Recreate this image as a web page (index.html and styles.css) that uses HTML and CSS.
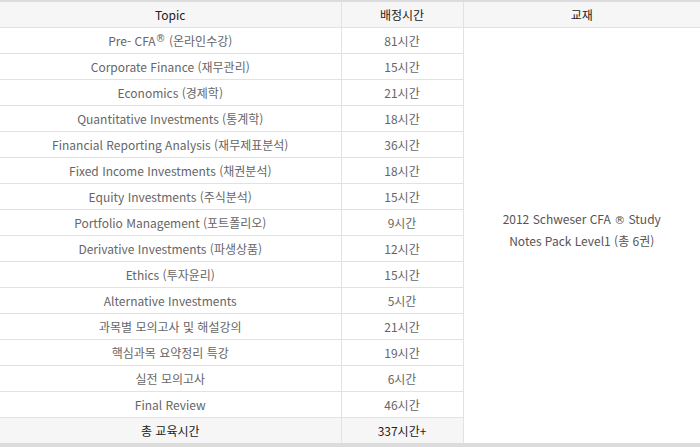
FILE: index.html
```html
<!DOCTYPE html>
<html lang="ko">
<head>
<meta charset="utf-8">
<link rel="stylesheet" href="styles.css">
</head>
<body>
<table class="curri">
  <colgroup>
    <col class="c-topic">
    <col class="c-time">
    <col class="c-book">
  </colgroup>
  <thead>
    <tr class="head">
      <th>Topic</th>
      <th>배정시간</th>
      <th>교재</th>
    </tr>
  </thead>
  <tbody>
    <tr><td>Pre- CFA<sup class="reg">®</sup> (온라인수강)</td><td>81시간</td>
      <td class="book" rowspan="16">2012 Schweser CFA <span class="reg-in">®</span> Study<br>Notes Pack Level1 (총 6권)</td></tr>
    <tr><td>Corporate Finance (재무관리)</td><td>15시간</td></tr>
    <tr><td>Economics (경제학)</td><td>21시간</td></tr>
    <tr><td>Quantitative Investments (통계학)</td><td>18시간</td></tr>
    <tr><td>Financial Reporting Analysis (재무제표분석)</td><td>36시간</td></tr>
    <tr><td>Fixed Income Investments (채권분석)</td><td>18시간</td></tr>
    <tr><td>Equity Investments (주식분석)</td><td>15시간</td></tr>
    <tr><td>Portfolio Management (포트폴리오)</td><td>9시간</td></tr>
    <tr><td>Derivative Investments (파생상품)</td><td>12시간</td></tr>
    <tr><td>Ethics (투자윤리)</td><td>15시간</td></tr>
    <tr><td>Alternative Investments</td><td>5시간</td></tr>
    <tr><td>과목별 모의고사 및 해설강의</td><td>21시간</td></tr>
    <tr><td>핵심과목 요약정리 특강</td><td>19시간</td></tr>
    <tr><td>실전 모의고사</td><td>6시간</td></tr>
    <tr><td>Final Review</td><td>46시간</td></tr>
    <tr class="total"><td>총 교육시간</td><td>337시간+</td></tr>
  </tbody>
</table>
</body>
</html>
```

FILE: styles.css
```css
html, body {
  margin: 0;
  padding: 0;
  background: #fff;
}
.curri {
  width: 700px;
  border-collapse: collapse;
  table-layout: fixed;
  font-family: "Noto Sans CJK KR", "Noto Sans", sans-serif;
  font-size: 12px;
  color: #666;
  border-top: 2px solid #dcdcdc;
  border-bottom: 4px solid #dcdcdc;
}
.c-topic { width: 341px; }
.c-time { width: 122px; }
.c-book { width: 237px; }
.curri th,
.curri td {
  height: 25px;
  padding: 0;
  text-align: center;
  vertical-align: middle;
  border: 1px solid #e2e2e2;
  line-height: 14px;
  white-space: nowrap;
}
.curri tr > :first-child { border-left: none; }
.curri tr > :last-child { border-right: none; }
.curri th {
  font-weight: normal;
  color: #222;
  background: #f6f6f6;
}
.curri .total td {
  color: #222;
  background: #f6f6f6;
}
.curri td.book {
  background: #fff;
  color: #555;
  line-height: 20px;
  padding-bottom: 12px;
  white-space: normal;
}
.reg {
  font-family: "DejaVu Sans", sans-serif;
  font-size: 10px;
  line-height: 0;
  vertical-align: 4px;
}
.reg-in {
  font-family: "DejaVu Sans", sans-serif;
  font-size: 11px;
}
```
